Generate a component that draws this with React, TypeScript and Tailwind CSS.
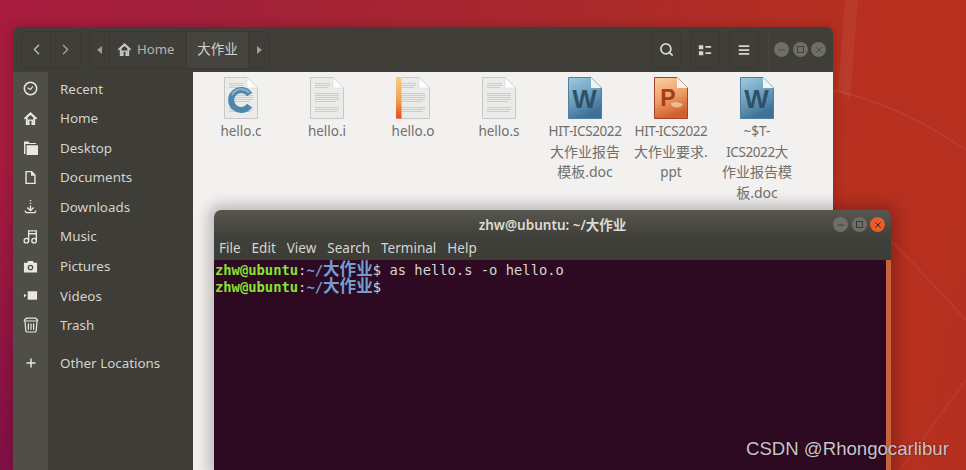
import { ChevronLeft, ChevronRight, Search, Minus, X } from 'lucide-react';

const uiFont = "font-['Noto_Sans','Noto_Sans_CJK_SC',sans-serif]";

const sidebarIcons: Record<string, React.ReactNode> = {
  Recent: (
    <svg viewBox="0 0 16 16" className="w-[15px] h-[15px]" fill="none" stroke="#e8e7e3" strokeWidth="1.6">
      <circle cx="8" cy="8" r="6.6" />
      <path d="M4.8 7.2 L8 9 L10.6 5.6" strokeWidth="1.2" />
    </svg>
  ),
  Home: (
    <svg viewBox="0 0 16 16" className="w-[15px] h-[15px]" fill="#e8e7e3">
      <path d="M8 1 L0.8 7.6 L2 8.8 L3 8 V15 H7 V10.5 H9 V15 H13 V8 L14 8.8 L15.2 7.6 Z M5 7 L8 4.2 L11 7 V13 H10.8 V9 H5.2 V13 H5 Z" fillRule="evenodd" />
    </svg>
  ),
  Desktop: (
    <svg viewBox="0 0 16 16" className="w-[16px] h-[16px]" fill="#e8e7e3">
      <path d="M1 1.5 H6 V3 H13 V4 H2.4 V14 H1 Z" />
      <path d="M3.6 5.2 H15 V15 H3.6 Z" />
    </svg>
  ),
  Documents: (
    <svg viewBox="0 0 16 16" className="w-[15px] h-[15px]" fill="#e8e7e3">
      <path fillRule="evenodd" d="M2.5 1 H9.5 L13.5 5 V15 H2.5 Z M4 2.5 V13.5 H12 V6 H8.5 V2.5 Z" />
    </svg>
  ),
  Downloads: (
    <svg viewBox="0 0 16 16" className="w-[15px] h-[15px]" fill="none" stroke="#e8e7e3" strokeWidth="1.5">
      <path d="M8 1 V2.4 M8 4 V5.4 M8 6.8 V12" />
      <path d="M4.6 9 L8 12.4 L11.4 9" />
      <path d="M2 12.4 L3.4 14.6 H12.6 L14 12.4" strokeWidth="1.3" />
    </svg>
  ),
  Music: (
    <svg viewBox="0 0 16 16" className="w-[15px] h-[15px]" fill="none" stroke="#e8e7e3" strokeWidth="1.5">
      <circle cx="3.6" cy="12.4" r="2.4" />
      <circle cx="11.8" cy="12.4" r="2.4" />
      <path d="M6 12 V2 H14.2 V12" />
      <path d="M6 5 H14" />
    </svg>
  ),
  Pictures: (
    <svg viewBox="0 0 16 16" className="w-[15px] h-[15px]" fill="#e8e7e3">
      <path fillRule="evenodd" d="M5.4 2 H10.6 L11.6 4 H15 V14.5 H1 V4 H4.4 Z M8 6 A3 3 0 1 0 8 12 A3 3 0 1 0 8 6 Z M8 7.4 A1.6 1.6 0 1 1 8 10.6 A1.6 1.6 0 1 1 8 7.4 Z" />
    </svg>
  ),
  Videos: (
    <svg viewBox="0 0 16 16" className="w-[15px] h-[15px]" fill="#e8e7e3">
      <path d="M5 3.5 H15 V12.5 H5 Z" />
      <path d="M1 6 L3.6 8 L1 10 Z" />
    </svg>
  ),
  Trash: (
    <svg viewBox="0 0 16 16" className="w-[16px] h-[16px]" fill="none" stroke="#e8e7e3" strokeWidth="1.2">
      <path d="M1.4 4 H14.6 V3 L12.6 1.2 H3.4 L1.4 3 Z" />
      <path d="M2 4.4 L2.8 13.6 Q3 15 4.4 15 H11.6 Q13 15 13.2 13.6 L14 4.4" />
      <path d="M5.4 6.4 V12.8 M8 6.4 V12.8 M10.6 6.4 V12.8" />
    </svg>
  ),
  'Other Locations': (
    <svg viewBox="0 0 16 16" className="w-[12px] h-[12px]" fill="#e8e7e3">
      <path d="M7 2 H9 V7 H14 V9 H9 V14 H7 V9 H2 V7 H7 Z" />
    </svg>
  ),
};

const places = ['Recent', 'Home', 'Desktop', 'Documents', 'Downloads', 'Music', 'Pictures', 'Videos', 'Trash'];

const PageBase = ({ children }: { children?: React.ReactNode }) => (
  <svg viewBox="0 0 34 42" className="w-[34px] h-[42px]">
    <path d="M0.5 0.5 H23 L33.5 11 V41.5 H0.5 Z" fill="#ebebe9" stroke="#c8c8c6" />
    <path d="M23 0.5 L33.5 11 H23 Z" fill="#ffffff" stroke="#d6d6d4" strokeWidth="0.6" />
    <g stroke="#c4c4c2" strokeWidth="0.8">
      <path d="M5 6.5 H20 M5 8.5 H20 M5 10.5 H18" />
      <path d="M5 16.5 H29 M5 18.5 H29 M5 20.5 H29 M5 22.5 H29 M5 24.5 H26" />
      <path d="M5 30.5 H29 M5 32.5 H29 M5 34.5 H27" />
    </g>
    {children}
  </svg>
);

const CIcon = () => (
  <PageBase>
    <path d="M25.5 17.5 A10 10 0 1 0 25.5 28.5" fill="none" stroke="#4f87ab" strokeWidth="6" />
    <path d="M25 15.5 A10.5 10.5 0 0 0 8 18" fill="none" stroke="#86b5d1" strokeWidth="2" />
  </PageBase>
);

const ObjIcon = () => (
  <PageBase>
    <defs>
      <linearGradient id="objbar" x1="0" y1="0" x2="0" y2="1">
        <stop offset="0" stopColor="#f6cf86" />
        <stop offset="0.55" stopColor="#f0a24e" />
        <stop offset="1" stopColor="#e8491c" />
      </linearGradient>
    </defs>
    <rect x="0" y="0.5" width="5.5" height="41" fill="url(#objbar)" />
  </PageBase>
);

const WordIcon = () => (
  <svg viewBox="0 0 34 42" className="w-[34px] h-[42px]">
    <defs>
      <linearGradient id="wordbg" x1="0" y1="0" x2="0.4" y2="1">
        <stop offset="0" stopColor="#9ecbdf" />
        <stop offset="0.55" stopColor="#6b9fbd" />
        <stop offset="1" stopColor="#3f7096" />
      </linearGradient>
    </defs>
    <path d="M0.5 0.5 H23 L33.5 11 V41.5 H0.5 Z" fill="url(#wordbg)" stroke="#4f7e9f" />
    <path d="M23 0.5 L33.5 11 H23 Z" fill="#f2f2f0" />
    <text x="16.5" y="31" textAnchor="middle" fontSize="26" fontWeight="700" fill="#2f5168" fontFamily="Liberation Sans, sans-serif">W</text>
  </svg>
);

const PptIcon = () => (
  <svg viewBox="0 0 34 42" className="w-[34px] h-[42px]">
    <defs>
      <linearGradient id="pptbg" x1="0" y1="0" x2="0.3" y2="1">
        <stop offset="0" stopColor="#fbcfa4" />
        <stop offset="0.55" stopColor="#ef9f68" />
        <stop offset="1" stopColor="#d0602e" />
      </linearGradient>
    </defs>
    <path d="M0.5 0.5 H23 L33.5 11 V41.5 H0.5 Z" fill="url(#pptbg)" stroke="#a8402a" />
    <path d="M23 0.5 L33.5 11 H23 Z" fill="#f6f4f0" />
    <path d="M17 26 A6 4 0 0 0 29 27 L23 25 Z" fill="#f7d3b0" opacity="0.7" />
    <text x="14" y="29" textAnchor="middle" fontSize="23" fontWeight="700" fill="#a83c14" fontFamily="Liberation Sans, sans-serif">P</text>
  </svg>
);

const files = [
  { icon: <CIcon />, lines: ['hello.c'] },
  { icon: <PageBase />, lines: ['hello.i'] },
  { icon: <ObjIcon />, lines: ['hello.o'] },
  { icon: <PageBase />, lines: ['hello.s'] },
  { icon: <WordIcon />, lines: ['HIT-ICS2022', '大作业报告', '模板.doc'] },
  { icon: <PptIcon />, lines: ['HIT-ICS2022', '大作业要求.', 'ppt'] },
  { icon: <WordIcon />, lines: ['~$T-', 'ICS2022大', '作业报告模', '板.doc'] },
];

// Caps run wide in Noto next to the reference font, CJK runs a bit narrow
const lineClass = (line: string) => {
  if (line.includes('ICS2022')) return 'tracking-[-0.4px]';
  if (/[\u4e00-\u9fff]/.test(line)) return 'text-[14px]';
  return '';
};

const ToolButton = ({ children }: { children: React.ReactNode }) => (
  <div className="w-[30px] h-[38px] flex items-center justify-center rounded-[5px] border border-[#393832]">{children}</div>
);

const WindowDot = ({ children, active }: { children: React.ReactNode; active?: boolean }) => (
  <div
    className={`w-[15px] h-[15px] rounded-full flex items-center justify-center ${
      active ? 'bg-[#e95c2c]' : 'bg-[#6e6d66]'
    }`}
  >
    {children}
  </div>
);

const Prompt = () => (
  <>
    <span className="text-[#8ae234] font-bold">zhw@ubuntu</span>
    <span className="text-[#d3d7cf]">:</span>
    <span className="text-[#729fcf] font-bold">
      ~/
      <span className="inline-block h-[17px] text-[16.6px] leading-[17px] font-['Noto_Sans_CJK_SC',sans-serif] font-bold">大作业</span>
    </span>
    <span className="text-[#d3d7cf]">$</span>
  </>
);

const FileManager = () => (
  <div className={`absolute left-[13px] top-[27px] w-[820px] h-[443px] flex flex-col rounded-t-[7px] overflow-hidden shadow-[0_0_10px_2px_rgba(0,0,0,0.15)] ${uiFont}`}>
    {/* Header */}
    <div className="h-[45px] shrink-0 flex items-center pl-[8px] pr-[7px] bg-[#3f3e39]">
      <div className="w-[60px] h-[38px] flex rounded-[5px] border border-[#393832]">
        <div className="w-[29px] flex items-center justify-center border-r border-[#393832]">
          <ChevronLeft size={17} color="#bdbcb6" strokeWidth={2} />
        </div>
        <div className="flex-1 flex items-center justify-center">
          <ChevronRight size={17} color="#a09f99" strokeWidth={2} />
        </div>
      </div>
      <div className="ml-[8px] w-[181px] h-[38px] flex rounded-[5px] border border-[#393832] text-[13.5px]">
        <div className="w-[20px] flex items-center justify-center border-r border-[#393832]">
          <div className="w-0 h-0 border-y-[4px] border-y-transparent border-r-[5px] border-r-[#9d9c96]" />
        </div>
        <div className="w-[76px] flex items-center gap-[5px] pl-[7px] text-[13.2px] text-[#b5b4ae]">
          <svg viewBox="0 0 16 16" className="w-[15px] h-[15px]" fill="#c8c7c1">
            <path d="M8 1 L0.8 7.6 L2 8.8 L3 8 V15 H7 V10.5 H9 V15 H13 V8 L14 8.8 L15.2 7.6 Z M5 7 L8 4.2 L11 7 V13 H10.8 V9 H5.2 V13 H5 Z" fillRule="evenodd" />
          </svg>
          Home
        </div>
        <div className="w-[63px] flex items-center justify-center bg-[#45443e] border-x border-[#393832] text-[#d2d1cb]">大作业</div>
        <div className="flex-1 flex items-center justify-center">
          <div className="w-0 h-0 border-y-[4px] border-y-transparent border-l-[5px] border-l-[#9d9c96]" />
        </div>
      </div>
      <div className="flex-1" />
      <div className="flex items-center gap-[9px]">
        <ToolButton>
          <Search size={15} color="#d6d5cf" strokeWidth={2.8} />
        </ToolButton>
        <ToolButton>
          <svg viewBox="0 0 16 16" className="w-[14px] h-[14px]" fill="#d6d5cf">
            <path d="M1 2.5 H6 V7 H1 Z M1 9.5 H6 V14 H1 Z M8.5 3.5 H15 V5.5 H8.5 Z M8.5 10.5 H15 V12.5 H8.5 Z" />
          </svg>
        </ToolButton>
        <ToolButton>
          <svg viewBox="0 0 16 16" className="w-[14px] h-[14px]" fill="#d6d5cf">
            <path d="M2 2.5 H14 V4.5 H2 Z M2 7 H14 V9 H2 Z M2 11.5 H14 V13.5 H2 Z" />
          </svg>
        </ToolButton>
      </div>
      <div className="w-px h-[38px] bg-[#45443e] ml-[9px] mr-[5px]" />
      <div className="flex items-center gap-[3.5px]">
        <WindowDot>
          <Minus size={10} color="#44433e" strokeWidth={2} />
        </WindowDot>
        <WindowDot>
          <div className="w-[7px] h-[7px] border border-[#44433e]" />
        </WindowDot>
        <WindowDot>
          <X size={10} color="#44433e" strokeWidth={2} />
        </WindowDot>
      </div>
    </div>

    <div className="flex-1 flex min-h-0">
      {/* Sidebar */}
      <div className="w-[180px] shrink-0 bg-[linear-gradient(90deg,#4f4e47_35px,#3e3d38_35px)] pt-[2px]">
        {places.map((name) => (
          <div key={name} className="h-[29.55px] flex items-center">
            <div className="w-[35px] flex justify-center">{sidebarIcons[name]}</div>
            <span className="ml-[12px] text-[13.4px] text-[#d4d3cd]">{name}</span>
          </div>
        ))}
        <div className="mt-[8px] h-[29.55px] flex items-center">
          <div className="w-[35px] flex justify-center">{sidebarIcons['Other Locations']}</div>
          <span className="ml-[12px] text-[13.4px] text-[#d4d3cd]">Other Locations</span>
        </div>
      </div>

      {/* Files */}
      <div className="flex-1 bg-[#f3f1f0] pl-[5px] pt-[5px]">
        <div className="flex">
          {files.map((file, i) => (
            <div key={i} className="w-[86px] flex flex-col items-center">
              {file.icon}
              <div className="mt-[2px] text-[13.5px] leading-[20.6px] text-[#6f6f6c] text-center whitespace-nowrap">
                {file.lines.map((line) => (
                  <div key={line} className={lineClass(line)}>{line}</div>
                ))}
              </div>
            </div>
          ))}
        </div>
      </div>
    </div>
  </div>
);

const Terminal = () => (
  <div className="absolute left-[214px] top-[210px] w-[677px] h-[260px] flex flex-col rounded-t-[7px] overflow-hidden shadow-[0_0_14px_6px_rgba(0,0,0,0.22)]">
    <div className={`h-[50px] shrink-0 flex flex-col bg-[linear-gradient(#57564f,#40403a_55%,#3d3c37)] ${uiFont}`}>
      <div className="h-[27px] relative flex items-center justify-center pt-[4px] text-[13.5px] font-semibold text-[#dfdbd2]">
        zhw@ubuntu: ~/大作业
        <div className="absolute right-[6px] top-[7px] flex items-center gap-[3.5px]">
          <WindowDot>
            <Minus size={10} color="#3b3a35" strokeWidth={2} />
          </WindowDot>
          <WindowDot>
            <div className="w-[7px] h-[7px] border border-[#3b3a35]" />
          </WindowDot>
          <WindowDot active>
            <X size={10} color="#3b2a20" strokeWidth={2.4} />
          </WindowDot>
        </div>
      </div>
      <div className="flex-1 flex items-center pl-[5px] gap-[11px] text-[13.5px] text-[#d6d5cf]">
        <span>File</span>
        <span>Edit</span>
        <span>View</span>
        <span>Search</span>
        <span>Terminal</span>
        <span>Help</span>
      </div>
    </div>
    <div className="flex-1 flex bg-[#2d0922]">
      <div className="flex-1 pl-px font-['DejaVu_Sans_Mono','Noto_Sans_CJK_SC',monospace] text-[13.8px] leading-[17px]">
        <div className="h-[17px] whitespace-pre">
          <Prompt />
          <span className="text-[#d3d7cf]"> as hello.s -o hello.o</span>
        </div>
        <div className="h-[17px] whitespace-pre">
          <Prompt />
        </div>
      </div>
      <div className="w-[5px] bg-[#c9623b]" />
    </div>
  </div>
);

export default function App() {
  return (
    <div className="relative w-[966px] h-[470px] overflow-hidden bg-[radial-gradient(circle_at_0%_100%,rgba(95,5,75,0.55),transparent_30%),linear-gradient(100deg,#a81b3e_0%,#a1203a_20%,#a92a2c_55%,#b8301f_85%,#b52f20_100%)]">
      {/* Wallpaper streaks */}
      <svg viewBox="0 0 966 470" className="absolute inset-0 w-[966px] h-[470px]">
        <path d="M845 0 L838 90 L850 100 L858 0 Z" fill="#ffffff" opacity="0.05" />
        <path d="M833 90 Q900 105 966 150" fill="none" stroke="#ffffff" strokeOpacity="0.06" strokeWidth="2" />
        <path d="M890 240 Q930 280 966 320" fill="none" stroke="#ffffff" strokeOpacity="0.06" strokeWidth="2" />
        <path d="M900 470 L966 380" fill="none" stroke="#ffffff" strokeOpacity="0.05" strokeWidth="2" />
      </svg>
      <FileManager />
      <Terminal />
      <div className="absolute left-[746px] top-[438px] text-[18.6px] leading-[22px] text-[#c9c4c6] font-['Liberation_Sans',sans-serif] [text-shadow:0_0_2px_rgba(0,0,0,0.5)] whitespace-nowrap">
        CSDN @Rhongocarlibur
      </div>
    </div>
  );
}
